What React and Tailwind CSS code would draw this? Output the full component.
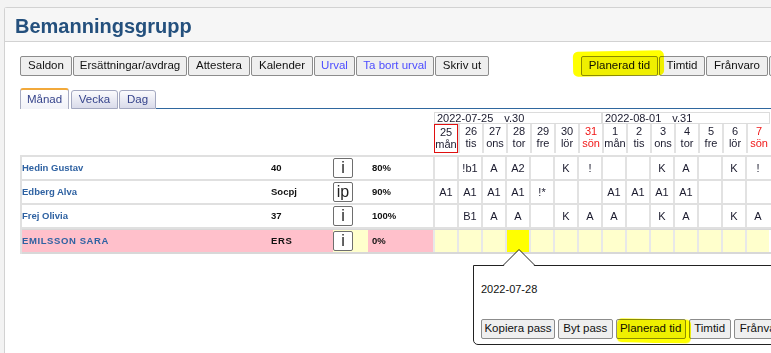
import React from "react";

const days = [
    ["25", "mån"], ["26", "tis"], ["27", "ons"], ["28", "tor"], ["29", "fre"], ["30", "lör"], ["31", "sön"],
    ["1", "mån"], ["2", "tis"], ["3", "ons"], ["4", "tor"], ["5", "fre"], ["6", "lör"], ["7", "sön"],
];

const staff = [
    { name: "Hedin Gustav", code: "40", info: "i", pct: "80%", cells: ["", "!b1", "A", "A2", "", "K", "!", "", "", "K", "A", "", "K", "!"] },
    { name: "Edberg Alva", code: "Socpj", info: "ip", pct: "90%", cells: ["A1", "A1", "A1", "A1", "!*", "", "", "A1", "A1", "A1", "A1", "", "", ""] },
    { name: "Frej Olivia", code: "37", info: "i", pct: "100%", cells: ["", "B1", "A", "A", "", "K", "A", "A", "", "K", "A", "", "K", "A"] },
];

function Btn({ children, className = "" }) {
    return (
        <div className={`h-[20px] flex items-center justify-center border border-[#8c8c8c] rounded-[2px] bg-[#efefef] text-[11.5px] whitespace-nowrap ${className}`}>
            {children}
        </div>
    );
}

function InfoBtn({ label }) {
    return (
        <div className="w-[20px] h-[20px] flex items-center justify-center border border-[#6e6e6e] rounded-[2px] bg-white text-[16px] leading-none text-[#222] pb-[1px]">
            {label}
        </div>
    );
}

export default function App() {
    return (
        <div className="relative w-[771px] h-[353px] overflow-hidden bg-[#f3f3f3] font-['Liberation_Sans',Arial,sans-serif] text-[#111]">
            <div className="ml-[4px] mt-[7px] w-[900px] h-[400px] border-l border-t border-[#d2d2d2] bg-white rounded-tl-[3px]">
                <div className="h-[34px] bg-[#f6f6f6] border-b border-[#d2d2d2] pl-[10px] flex items-center">
                    <h1 className="text-[20px] font-bold text-[#24507d] leading-none pt-[2px]">Bemanningsgrupp</h1>
                </div>

                <div className="pl-[15px] pt-[14px]">
                    {/* toolbar */}
                    <div className="flex">
                        <div className="flex gap-[1px]">
                            <Btn className="w-[52px]">Saldon</Btn>
                            <Btn className="w-[114px]">Ersättningar/avdrag</Btn>
                            <Btn className="w-[62px]">Attestera</Btn>
                            <Btn className="w-[62px]">Kalender</Btn>
                            <Btn className="w-[41px] text-[#4d4dff]">Urval</Btn>
                            <Btn className="w-[78px] text-[#4d4dff]">Ta bort urval</Btn>
                            <Btn className="w-[54px]">Skriv ut</Btn>
                        </div>
                        <div className="flex gap-[1px] ml-[92px]">
                            <Btn className="w-[77px]">Planerad tid</Btn>
                            <Btn className="w-[46px]">Timtid</Btn>
                            <Btn className="w-[62px]">Frånvaro</Btn>
                            <Btn className="w-[60px]" />
                        </div>
                    </div>

                    {/* tabs */}
                    <div className="flex items-end h-[21px] mt-[12px] text-[11.5px] text-[#36448c]">
                        <div className="h-[21px] w-[49px] flex items-center justify-center border-t-2 border-t-[#f2a93b] border-x border-x-[#a9adc2] bg-gradient-to-b from-white to-[#f1f2f8] rounded-t-[3px]">
                            Månad
                        </div>
                        <div className="ml-[2px] h-[19px] w-[47px] flex items-center justify-center border border-[#a3a8c0] bg-gradient-to-b from-[#fbfbfd] to-[#d9dbea] rounded-t-[3px]">
                            Vecka
                        </div>
                        <div className="ml-[1px] h-[19px] w-[37px] flex items-center justify-center border border-[#a3a8c0] bg-gradient-to-b from-[#fbfbfd] to-[#d9dbea] rounded-t-[3px]">
                            Dag
                        </div>
                        <div className="flex-1 h-[21px] border-b border-[#2f679f]" />
                    </div>

                    {/* header */}
                    <div className="flex mt-[3px] text-[11px] text-[#1b1b2e]">
                        <div className="w-[414px] shrink-0" />
                        <div className="flex flex-col">
                            <div className="flex h-[12px]">
                                <div className="w-[168px] border border-[#dcdcdc] leading-[10px] pl-[2px] whitespace-nowrap">
                                    2022-07-25<span className="ml-[11px]">v.30</span>
                                </div>
                                <div className="w-[168px] border border-[#dcdcdc] leading-[10px] pl-[2px] whitespace-nowrap">
                                    2022-08-01<span className="ml-[11px]">v.31</span>
                                </div>
                            </div>
                            <div className="flex h-[29px]">
                                {days.map(([n, d], i) => (
                                    <div
                                        key={i}
                                        className={`w-[24px] shrink-0 flex flex-col items-center leading-[12px] pt-[1px] ${
                                            i === 0 ? "border border-[#e01010]" : "border-l-2 border-[#e2e2e2]"
                                        } ${i === 6 || i === 13 ? "text-[#f01818]" : ""}`}
                                    >
                                        <span>{n}</span>
                                        <span>{d}</span>
                                    </div>
                                ))}
                            </div>
                        </div>
                    </div>

                    {/* rows */}
                    <div className="mt-[2px] w-[900px] border-t-2 border-l-2 border-[#e0e0e0] text-[11px] text-[#1b1b2e]">
                        {staff.map((s) => (
                            <div key={s.name} className="flex h-[24px] border-b-2 border-[#e0e0e0]">
                                <div className="w-[249px] shrink-0 flex items-center text-[9.5px] font-bold text-[#2f62a2]">{s.name}</div>
                                <div className="w-[62px] shrink-0 flex items-center text-[9.5px] font-bold text-[#111]">{s.code}</div>
                                <div className="w-[35px] shrink-0 flex items-center"><InfoBtn label={s.info} /></div>
                                <div className="w-[65px] shrink-0 flex items-center pl-[4px] text-[9.5px] font-bold text-[#111]">{s.pct}</div>
                                {s.cells.map((c, i) => (
                                    <div key={i} className="w-[24px] shrink-0 border-l-2 border-[#e2e2e2] flex items-center justify-center">
                                        {c}
                                    </div>
                                ))}
                            </div>
                        ))}
                        <div className="flex h-[25px] border-t border-b-2 border-[#d8d8d8]">
                            <div className="w-[311px] shrink-0 flex items-center bg-[#ffc0cb] text-[9.5px] font-bold text-[#2f62a2]">
                                <span className="w-[249px] tracking-[0.6px]">EMILSSON SARA</span>
                                <span className="text-[#111] tracking-[0.6px]">ERS</span>
                            </div>
                            <div className="w-[35px] shrink-0 flex items-center bg-[#ffffcc]"><InfoBtn label="i" /></div>
                            <div className="w-[65px] shrink-0 flex items-center pl-[4px] bg-[#ffc0cb] text-[9.5px] font-bold text-[#111]">0%</div>
                            {days.map((_, i) => (
                                <div
                                    key={i}
                                    className={`w-[24px] shrink-0 border-l-2 border-[#e8e8e8] ${i === 3 ? "bg-[#ffff00]" : "bg-[#ffffcc]"}`}
                                />
                            ))}
                        </div>
                    </div>
                </div>
            </div>

            {/* highlight marker on toolbar */}
            <div className="absolute left-[573px] top-[51px] w-[91px] h-[25px] bg-[#ffff00] mix-blend-multiply rounded-[5px] -rotate-1" />

            {/* popover */}
            <div className="absolute left-[473px] top-[265px] w-[320px] h-[80px] border border-[#222] rounded-bl-[5px] bg-white pl-[7px] pt-[17px]">
                <div className="text-[11px] leading-[13px] text-[#111]">2022-07-28</div>
                <div className="flex gap-[3px] mt-[23px] text-[10.5px]">
                    <Btn className="w-[76px] text-[10.5px]">Kopiera pass</Btn>
                    <Btn className="w-[56px] text-[10.5px]">Byt pass</Btn>
                    <Btn className="w-[72px] text-[10.5px]">Planerad tid</Btn>
                    <Btn className="w-[43px] text-[10.5px]">Timtid</Btn>
                    <Btn className="w-[60px] text-[10.5px]">Frånvaro</Btn>
                </div>
            </div>
            <svg className="absolute left-[503px] top-[249px]" width="32" height="18" viewBox="0 0 32 18">
                <polygon points="0,17.5 16,1 32,17.5" fill="white" />
                <polyline points="0,16.5 16,0.5 32,16.5" fill="none" stroke="#222" strokeWidth="1" />
            </svg>
            <div className="absolute left-[617px] top-[319px] w-[74px] h-[24px] bg-[#ffff00] mix-blend-multiply rounded-[5px] rotate-1" />
        </div>
    );
}
